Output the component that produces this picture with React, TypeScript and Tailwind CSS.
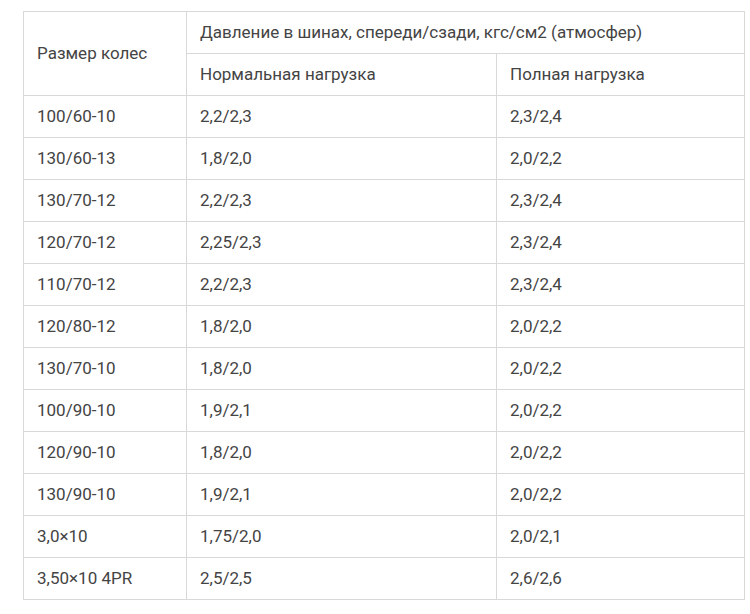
const rows: [string, string, string][] = [
  ['100/60-10', '2,2/2,3', '2,3/2,4'],
  ['130/60-13', '1,8/2,0', '2,0/2,2'],
  ['130/70-12', '2,2/2,3', '2,3/2,4'],
  ['120/70-12', '2,25/2,3', '2,3/2,4'],
  ['110/70-12', '2,2/2,3', '2,3/2,4'],
  ['120/80-12', '1,8/2,0', '2,0/2,2'],
  ['130/70-10', '1,8/2,0', '2,0/2,2'],
  ['100/90-10', '1,9/2,1', '2,0/2,2'],
  ['120/90-10', '1,8/2,0', '2,0/2,2'],
  ['130/90-10', '1,9/2,1', '2,0/2,2'],
  ['3,0×10', '1,75/2,0', '2,0/2,1'],
  ['3,50×10 4PR', '2,5/2,5', '2,6/2,6'],
]

export default function App() {
  const cell = 'h-[42px] border border-[#d9d9d9] px-[13px] py-0 text-left align-middle font-normal'
  return (
    <div className="min-h-[614px] bg-white pl-[23px] pt-[11px] font-['Roboto',sans-serif] text-[17px] text-[#444]">
      <table className="w-[721px] table-fixed border-collapse">
        <colgroup>
          <col className="w-[163px]" />
          <col className="w-[310px]" />
          <col className="w-[248px]" />
        </colgroup>
        <thead>
          <tr>
            <th rowSpan={2} className={cell}>Размер колес</th>
            <th colSpan={2} className={cell}>Давление в шинах, спереди/сзади, кгс/см2 (атмосфер)</th>
          </tr>
          <tr>
            <th className={cell}>Нормальная нагрузка</th>
            <th className={cell}>Полная нагрузка</th>
          </tr>
        </thead>
        <tbody>
          {rows.map((r) => (
            <tr key={r[0]}>
              <td className={cell}>{r[0]}</td>
              <td className={cell}>{r[1]}</td>
              <td className={cell}>{r[2]}</td>
            </tr>
          ))}
        </tbody>
      </table>
    </div>
  )
}
